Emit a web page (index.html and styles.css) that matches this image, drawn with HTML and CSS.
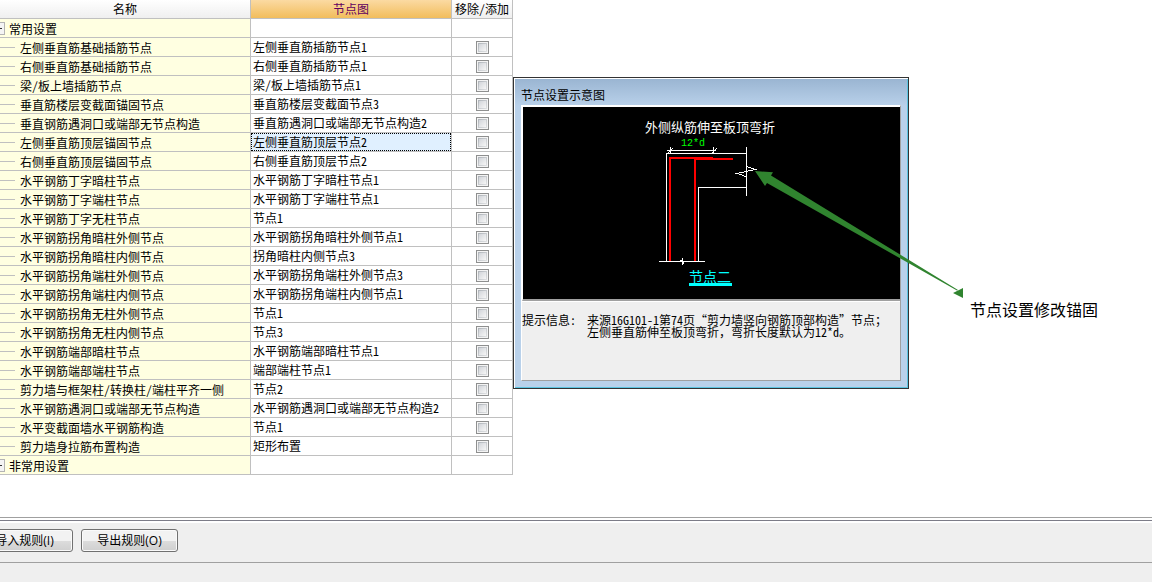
FILE: index.html
```html
<!DOCTYPE html>
<html lang="zh-CN">
<head>
<meta charset="utf-8">
<title>节点设置</title>
<link rel="stylesheet" href="styles.css">
</head>
<body>
<div class="app">
<main class="workspace">
<table class="grid">
<colgroup><col class="col-name"><col class="col-node"><col class="col-toggle"></colgroup>
<thead><tr><th scope="col">名称</th><th scope="col" class="active">节点图</th><th scope="col">移除/添加</th></tr></thead>
<tbody>
<tr class="group"><th scope="row"><div class="branch"><button type="button" class="expander" aria-label="折叠常用设置"></button>常用设置</div></th><td></td><td></td></tr>
<tr><th scope="row"><div class="leaf">左侧垂直筋基础插筋节点</div></th><td>左侧垂直筋插筋节点1</td><td><input type="checkbox" aria-label="左侧垂直筋基础插筋节点"></td></tr>
<tr><th scope="row"><div class="leaf">右侧垂直筋基础插筋节点</div></th><td>右侧垂直筋插筋节点1</td><td><input type="checkbox" aria-label="右侧垂直筋基础插筋节点"></td></tr>
<tr><th scope="row"><div class="leaf">梁/板上墙插筋节点</div></th><td>梁/板上墙插筋节点1</td><td><input type="checkbox" aria-label="梁/板上墙插筋节点"></td></tr>
<tr><th scope="row"><div class="leaf">垂直筋楼层变截面锚固节点</div></th><td>垂直筋楼层变截面节点3</td><td><input type="checkbox" aria-label="垂直筋楼层变截面锚固节点"></td></tr>
<tr><th scope="row"><div class="leaf">垂直钢筋遇洞口或端部无节点构造</div></th><td>垂直筋遇洞口或端部无节点构造2</td><td><input type="checkbox" aria-label="垂直钢筋遇洞口或端部无节点构造"></td></tr>
<tr><th scope="row"><div class="leaf">左侧垂直筋顶层锚固节点</div></th><td class="selected"><div class="focus">左侧垂直筋顶层节点2</div></td><td><input type="checkbox" aria-label="左侧垂直筋顶层锚固节点"></td></tr>
<tr><th scope="row"><div class="leaf">右侧垂直筋顶层锚固节点</div></th><td>右侧垂直筋顶层节点2</td><td><input type="checkbox" aria-label="右侧垂直筋顶层锚固节点"></td></tr>
<tr><th scope="row"><div class="leaf">水平钢筋丁字暗柱节点</div></th><td>水平钢筋丁字暗柱节点1</td><td><input type="checkbox" aria-label="水平钢筋丁字暗柱节点"></td></tr>
<tr><th scope="row"><div class="leaf">水平钢筋丁字端柱节点</div></th><td>水平钢筋丁字端柱节点1</td><td><input type="checkbox" aria-label="水平钢筋丁字端柱节点"></td></tr>
<tr><th scope="row"><div class="leaf">水平钢筋丁字无柱节点</div></th><td>节点1</td><td><input type="checkbox" aria-label="水平钢筋丁字无柱节点"></td></tr>
<tr><th scope="row"><div class="leaf">水平钢筋拐角暗柱外侧节点</div></th><td>水平钢筋拐角暗柱外侧节点1</td><td><input type="checkbox" aria-label="水平钢筋拐角暗柱外侧节点"></td></tr>
<tr><th scope="row"><div class="leaf">水平钢筋拐角暗柱内侧节点</div></th><td>拐角暗柱内侧节点3</td><td><input type="checkbox" aria-label="水平钢筋拐角暗柱内侧节点"></td></tr>
<tr><th scope="row"><div class="leaf">水平钢筋拐角端柱外侧节点</div></th><td>水平钢筋拐角端柱外侧节点3</td><td><input type="checkbox" aria-label="水平钢筋拐角端柱外侧节点"></td></tr>
<tr><th scope="row"><div class="leaf">水平钢筋拐角端柱内侧节点</div></th><td>水平钢筋拐角端柱内侧节点1</td><td><input type="checkbox" aria-label="水平钢筋拐角端柱内侧节点"></td></tr>
<tr><th scope="row"><div class="leaf">水平钢筋拐角无柱外侧节点</div></th><td>节点1</td><td><input type="checkbox" aria-label="水平钢筋拐角无柱外侧节点"></td></tr>
<tr><th scope="row"><div class="leaf">水平钢筋拐角无柱内侧节点</div></th><td>节点3</td><td><input type="checkbox" aria-label="水平钢筋拐角无柱内侧节点"></td></tr>
<tr><th scope="row"><div class="leaf">水平钢筋端部暗柱节点</div></th><td>水平钢筋端部暗柱节点1</td><td><input type="checkbox" aria-label="水平钢筋端部暗柱节点"></td></tr>
<tr><th scope="row"><div class="leaf">水平钢筋端部端柱节点</div></th><td>端部端柱节点1</td><td><input type="checkbox" aria-label="水平钢筋端部端柱节点"></td></tr>
<tr><th scope="row"><div class="leaf">剪力墙与框架柱/转换柱/端柱平齐一侧</div></th><td>节点2</td><td><input type="checkbox" aria-label="剪力墙与框架柱/转换柱/端柱平齐一侧"></td></tr>
<tr><th scope="row"><div class="leaf">水平钢筋遇洞口或端部无节点构造</div></th><td>水平钢筋遇洞口或端部无节点构造2</td><td><input type="checkbox" aria-label="水平钢筋遇洞口或端部无节点构造"></td></tr>
<tr><th scope="row"><div class="leaf">水平变截面墙水平钢筋构造</div></th><td>节点1</td><td><input type="checkbox" aria-label="水平变截面墙水平钢筋构造"></td></tr>
<tr><th scope="row"><div class="leaf">剪力墙身拉筋布置构造</div></th><td>矩形布置</td><td><input type="checkbox" aria-label="剪力墙身拉筋布置构造"></td></tr>
<tr class="group"><th scope="row"><div class="branch"><button type="button" class="expander" aria-label="折叠非常用设置"></button>非常用设置</div></th><td></td><td></td></tr>
</tbody>
</table>
</main>
<footer class="footer">
<div class="actions">
<button type="button" class="btn btn-import">导入规则<span class="key">(I)</span></button>
<button type="button" class="btn">导出规则<span class="key">(O)</span></button>
</div>
<div class="status"></div>
</footer>

<section class="dialog" role="dialog" aria-labelledby="dialog-title">
<h2 class="dialog-title" id="dialog-title">节点设置示意图</h2>
<div class="dialog-body">
<svg class="drawing" viewBox="523 107 377 192" role="img" aria-label="节点二">
<g fill="none" stroke="#fff" stroke-width="1" shape-rendering="crispEdges">
<path d="M666.5 262V153.5H746M746.5 147V196M698.5 262V187.5H746M659 261.5H705M667 150.5H716M670.5 147V154M713.5 147V154M667 154L673 148M711 154L717 148"/>
<path d="M746.5 166L749 167.500L755.500 169.500L746 171.500L737 173.500L742 175L746.500 177M680 260.500H682.500V258V264L684 262.500"/>
</g>
<g fill="none" stroke="#f00" stroke-width="2" shape-rendering="crispEdges">
<path d="M670 261V158H713M695 261V159H733"/>
</g>
<text class="cad-title" x="645" y="132">外侧纵筋伸至板顶弯折</text>
<text class="cad-size" x="681" y="146">12*d</text>
<text class="cad-label" x="689" y="282">节点二</text>
<path d="M689 283H732V286H689Z" fill="#0ff"/>
</svg>
<div class="tip">
<span class="tip-label">提示信息:</span>
<p class="tip-text">来源16G101-1第74页“剪力墙竖向钢筋顶部构造”节点；<br>左侧垂直筋伸至板顶弯折<span class="full">，</span>弯折长度默认为12*d。</p>
</div>
</div>
</section>

<svg class="arrow" viewBox="755 171 208 128" aria-hidden="true">
<path fill="#30842f" d="M755 171L773 172.300L771 175.500L958 290L957 290.500L767 183L765 186ZM953 293L963 288V298Z"/>
</svg>
<p class="note">节点设置修改锚固</p>
</div>
</body>
</html>
```

FILE: styles.css
```css
* {
  box-sizing: border-box;
}

body {
  margin: 0;
  background: #fff;
  color: #000;
  font: 12px/18px "Noto Sans CJK SC", "Liberation Sans", sans-serif;
  font-feature-settings: "hwid";
}

button {
  font: inherit;
  color: inherit;
}

.app {
  position: relative;
  display: flex;
  flex-direction: column;
  min-height: 100vh;
  overflow: hidden;
}

.workspace {
  flex: 1;
}

/* Settings grid */
.grid {
  width: 513px;
  table-layout: fixed;
  border-collapse: separate;
  border-spacing: 0;
}

.col-name { width: 251px; }
.col-node { width: 201px; }
.col-toggle { width: 61px; }

.grid th,
.grid td {
  height: 19px;
  padding: 0 2px;
  border-right: 1px solid #c0c0c0;
  border-bottom: 1px solid #c0c0c0;
  font-weight: 400;
  text-align: left;
  white-space: nowrap;
}

.grid thead th {
  text-align: center;
  background: linear-gradient(#fff, #efefef);
}

.grid thead .active {
  color: #600060;
  background: linear-gradient(#fbdaa2, #f2bd5c);
}

.grid tbody th {
  padding: 0;
  background: #ffffe1;
}

.grid .selected {
  padding: 0;
  background: #e0f0ff;
}

.focus {
  height: 18px;
  padding: 0 1px;
  border: 1px dotted #000;
  line-height: 16px;
}

.leaf,
.branch {
  display: flex;
  align-items: center;
  gap: 4px;
  height: 18px;
  padding-top: 1px;
}

.leaf {
  gap: 5px;
}

.leaf::before {
  content: "";
  width: 15px;
  height: 1px;
  background: #c0c0c0;
}

.expander {
  width: 5px;
  height: 13px;
  padding: 0;
  border: 1px solid #b4b4b4;
  border-left: 0;
  background: linear-gradient(#333, #333) left center / 2px 1px no-repeat, #f4f4f4;
}

.grid input {
  display: block;
  appearance: none;
  width: 13px;
  height: 13px;
  margin: 0 auto;
  padding: 1px;
  border: 1px solid #8e8f8f;
  background:
    linear-gradient(135deg, #d2d5da, #f6f6f6) center / 7px 7px no-repeat,
    linear-gradient(135deg, #aeb3b9, #e0e2e4) center / 9px 9px no-repeat,
    #f4f4f4;
}

/* Bottom bar */
.footer {
  padding-top: 2px;
  border-top: 1px solid #a0a0a0;
  background: linear-gradient(#fff, #fff) top / 100% 2px no-repeat, #efefef;
}

.actions {
  display: flex;
  gap: 8px;
  height: 42px;
  padding-top: 8px;
  border-top: 1px solid #7c7c88;
  background: linear-gradient(#fff, #fff) top / 100% 2px no-repeat;
}

.btn {
  width: 97px;
  height: 23px;
  padding: 0;
  border: 1px solid #707070;
  border-radius: 3px;
  background: linear-gradient(#f2f2f2 50%, #dddddd 50%, #cfcfcf);
  box-shadow: inset 0 0 0 1px #fafafa;
  line-height: 20px;
}

.btn-import {
  margin-left: -24px;
}

.key {
  font-family: "Open Sans", sans-serif;
}

.status {
  height: 20px;
  border-top: 1px solid #a0a0a0;
}

/* Floating preview window */
.dialog {
  position: absolute;
  left: 513px;
  top: 77px;
  width: 396px;
  padding: 1px 7px 7px;
  border: 1px solid #333;
  background: linear-gradient(#99b4d1, #b9d1ea 28px);
  box-shadow: inset 1px 1px #fff, inset -1px -1px #5cc4e0;
}

.dialog-title {
  margin: 0;
  padding-top: 6px;
  height: 26px;
  font-size: 12px;
  font-weight: 400;
  line-height: 20px;
}

.dialog-body {
  border: 1px solid #a0a0a0;
  border-top-color: #fff;
  border-left-color: #fff;
  background: #efefef;
}

.drawing {
  display: block;
  width: 100%;
  background: #000;
  border: 1px solid #fff;
  border-right: 0;
  border-bottom: 2px solid #a0a0a0;
}

.cad-title {
  fill: #fff;
  font-size: 13px;
}

.cad-size {
  fill: #0f0;
  font: 10px "Liberation Mono", monospace;
}

.cad-label {
  fill: #0ff;
  font-size: 14px;
}

.tip {
  display: flex;
  height: 79px;
  padding-top: 12px;
  border-top: 1px solid #fff;
  line-height: 12px;
}

.tip-label {
  flex: 0 0 65px;
}

.tip-text {
  margin: 0;
  white-space: nowrap;
}

.full {
  font-feature-settings: normal;
}

/* Callout over the preview */
.arrow {
  position: absolute;
  left: 755px;
  top: 171px;
  width: 208px;
  height: 128px;
}

.note {
  position: absolute;
  left: 970px;
  top: 299px;
  margin: 0;
  font-size: 16px;
  line-height: 20px;
  white-space: nowrap;
}
```
